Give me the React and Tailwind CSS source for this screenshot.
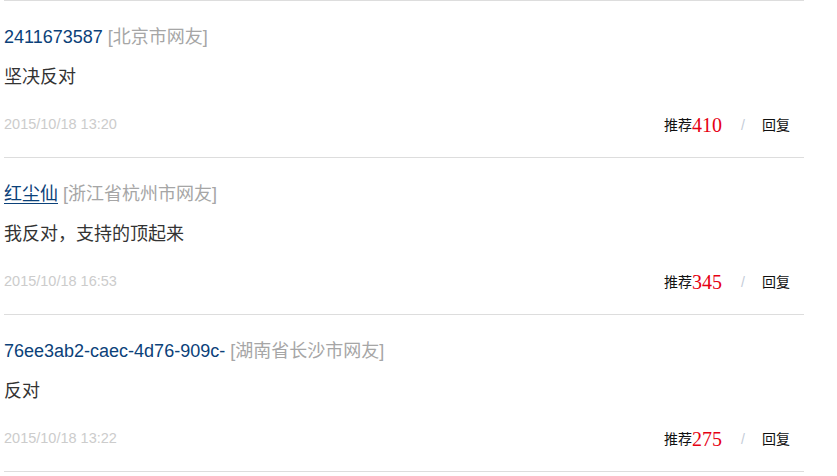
const comments = [
  {
    user: "2411673587",
    location: "[北京市网友]",
    text: "坚决反对",
    time: "2015/10/18 13:20",
    likes: 410,
  },
  {
    user: "红尘仙",
    location: "[浙江省杭州市网友]",
    text: "我反对，支持的顶起来",
    time: "2015/10/18 16:53",
    likes: 345,
    underline: true,
  },
  {
    user: "76ee3ab2-caec-4d76-909c-",
    location: "[湖南省长沙市网友]",
    text: "反对",
    time: "2015/10/18 13:22",
    likes: 275,
  },
]

const CommentItem = ({ c }) => (
  <div className="border-b border-[#dddddd] pt-6 pb-[22px]">
    <div className="h-6 leading-6 text-[18px]">
      <a className={`text-[#0b4179] ${c.underline ? "underline underline-offset-[3px]" : ""}`}>{c.user}</a>{" "}
      <span className="text-[#a6a6a6]">{c.location}</span>
    </div>
    <p className="mt-4 h-6 leading-6 text-[18px] text-[#333333]">{c.text}</p>
    <div className="mt-[26px] flex h-5 items-center justify-between">
      <span className="text-[14.5px] text-[#cccccc]">{c.time}</span>
      <div className="mr-[14px] flex items-center text-[14px] text-[#111111]">
        <span>推荐</span>
        <span className="text-[20px] leading-5 text-[#e60012] [font-family:'Liberation_Serif',serif]">{c.likes}</span>
        <span className="ml-[19px] mr-[17px] text-[#c4ccd8]">/</span>
        <span>回复</span>
      </div>
    </div>
  </div>
)

export default function App() {
  return (
    <div className="min-h-[476px] bg-white [font-family:'Liberation_Sans','Noto_Sans_CJK_SC',sans-serif]">
      <div className="ml-1 w-[800px] border-t border-[#dddddd]">
        {comments.map((c) => (
          <CommentItem key={c.time} c={c} />
        ))}
      </div>
    </div>
  )
}
